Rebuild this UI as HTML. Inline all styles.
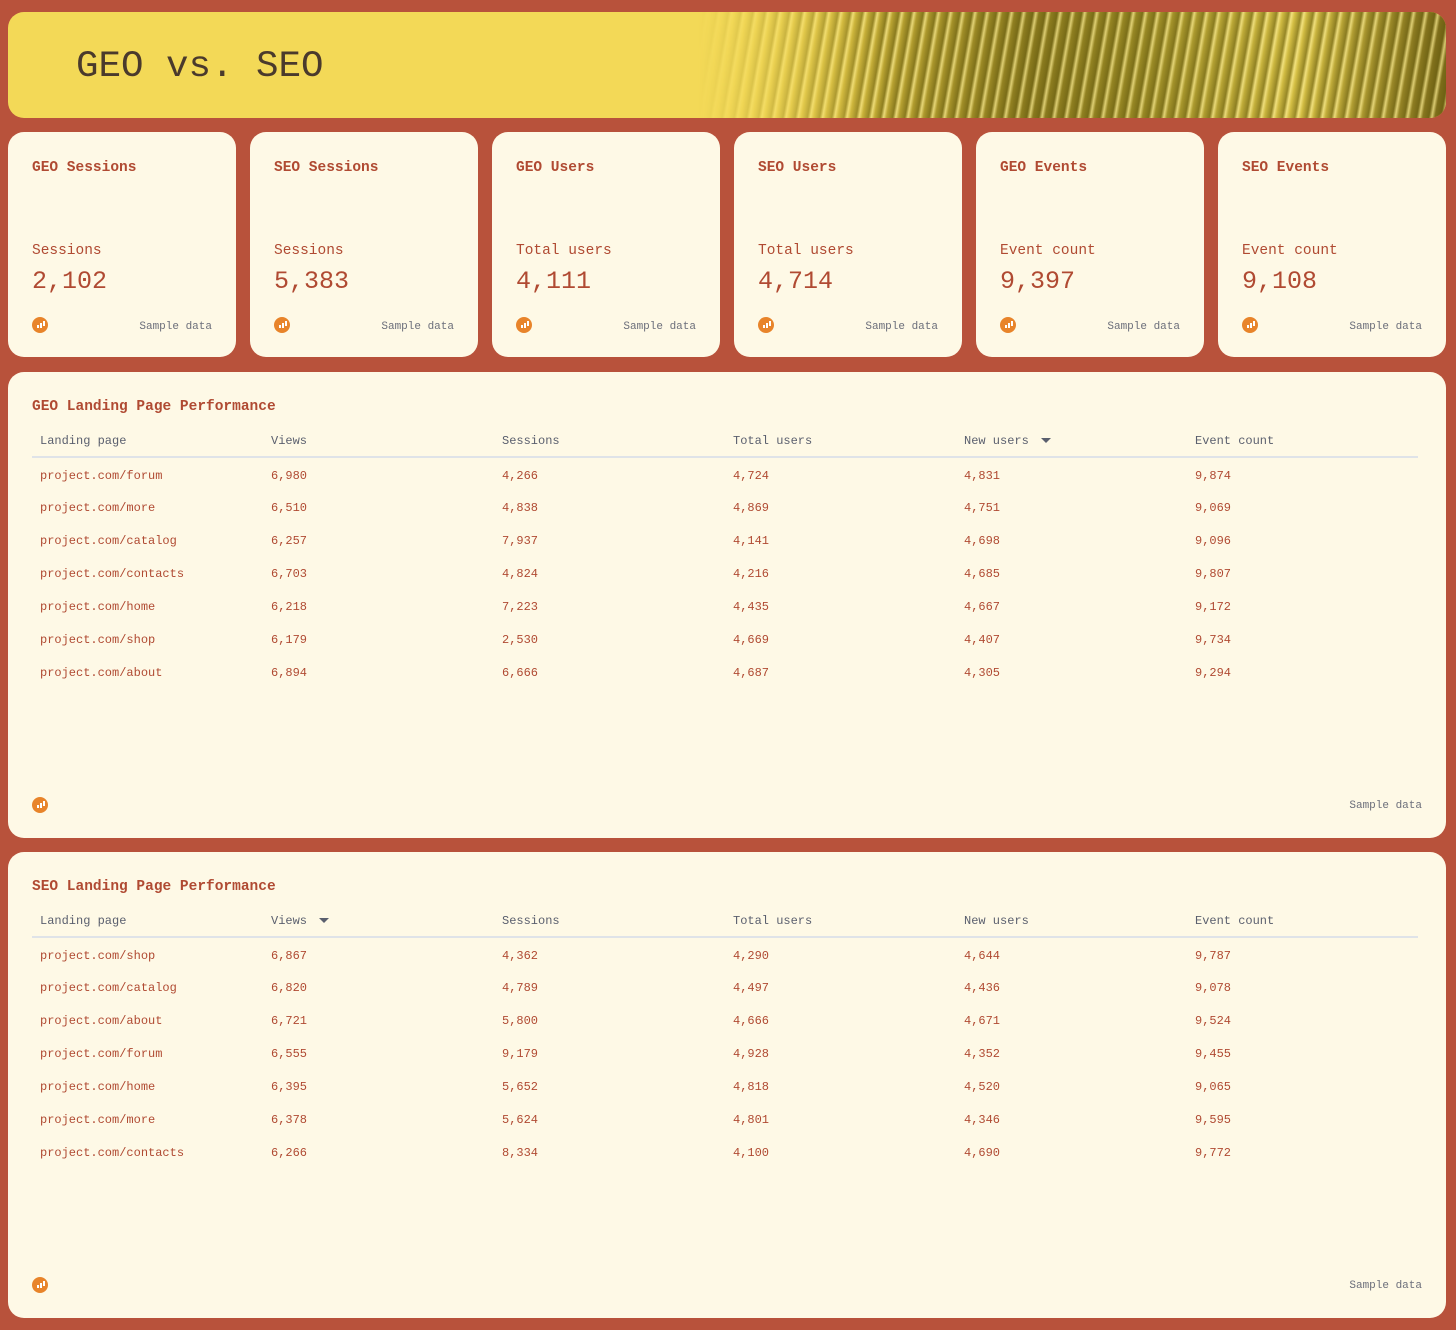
<!DOCTYPE html>
<html><head><meta charset="utf-8"><style>
*{box-sizing:border-box;margin:0;padding:0}
body{width:1456px;height:1330px;background:#b8523b;font-family:"Liberation Mono",monospace;position:relative;overflow:hidden}
.hdr{position:absolute;left:8px;top:12px;width:1438px;height:106px;border-radius:16px;background:#f3d957;overflow:hidden}
.hdr h1{position:absolute;left:68px;top:34px;font-size:37.5px;font-weight:normal;color:#4a3a2c;letter-spacing:0}
.stripes{position:absolute;left:690px;top:0;right:0;bottom:0;
background:repeating-linear-gradient(100deg,rgba(90,80,10,0) 0,rgba(100,90,15,.55) 6px,rgba(255,240,150,.7) 9px,rgba(90,80,10,0) 12px),
linear-gradient(90deg,#f3d957 0%,#c8b038 20%,#8a7a1e 45%,#9a8a25 60%,#d6c045 80%,#7a6a18 100%);
-webkit-mask-image:linear-gradient(90deg,transparent 0,#000 25%);}
.card{position:absolute;top:132px;width:228px;height:225px;background:#fef9e6;border-radius:16px}
.card .t{position:absolute;left:24px;top:28px;font-size:14.5px;font-weight:bold;color:#b04a32}
.card .l{position:absolute;left:24px;top:111px;font-size:14.5px;color:#b04a32}
.card .v{position:absolute;left:24px;top:135px;font-size:25px;color:#b04a32}
.ic{position:absolute;width:16px;height:16px;border-radius:50%;background:#e8842a}
.ic::before{content:"";position:absolute;left:5px;top:8px;width:2px;height:3px;background:#fff;box-shadow:3px -2px 0 0 #fff,6px -4px 0 0 #fff}
.ic::after{content:"";position:absolute;left:8px;top:6px;width:2px;height:5px;background:#fff;box-shadow:3px -2px 0 0 #fff}
.card .ic{left:24px;top:185px}
.sd{position:absolute;font-size:11px;color:#6b6e7a}
.card .sd{right:24px;top:189px}
.panel{position:absolute;left:8px;width:1438px;height:466px;background:#fef9e6;border-radius:16px}
.panel .t{position:absolute;left:24px;top:27px;font-size:14.5px;font-weight:bold;color:#b04a32}
.panel table{position:absolute;left:24px;top:57px;width:1386px;border-collapse:collapse;font-size:12px}
.panel th{text-align:left;font-weight:normal;color:#5a5f6e;height:28px;padding-left:8px;padding-bottom:3px;border-bottom:2px solid #dfe3e8;vertical-align:middle;width:231px}
.panel td{color:#b04a32;height:33px;padding-left:8px;padding-top:3px;vertical-align:middle}
.arr{display:inline-block;margin-left:12px;border-left:5px solid transparent;border-right:5px solid transparent;border-top:5px solid #5a5f6e;vertical-align:middle}
.panel .ic{left:24px;top:425px}
.panel .sd{right:24px;top:428px}
</style></head><body>
<div class="hdr"><div class="stripes"></div><h1>GEO vs. SEO</h1></div>

<div class="card" style="left:8px"><div class="t">GEO Sessions</div><div class="l">Sessions</div><div class="v">2,102</div><div class="ic"></div><div class="sd">Sample data</div></div>
<div class="card" style="left:250px"><div class="t">SEO Sessions</div><div class="l">Sessions</div><div class="v">5,383</div><div class="ic"></div><div class="sd">Sample data</div></div>
<div class="card" style="left:492px"><div class="t">GEO Users</div><div class="l">Total users</div><div class="v">4,111</div><div class="ic"></div><div class="sd">Sample data</div></div>
<div class="card" style="left:734px"><div class="t">SEO Users</div><div class="l">Total users</div><div class="v">4,714</div><div class="ic"></div><div class="sd">Sample data</div></div>
<div class="card" style="left:976px"><div class="t">GEO Events</div><div class="l">Event count</div><div class="v">9,397</div><div class="ic"></div><div class="sd">Sample data</div></div>
<div class="card" style="left:1218px"><div class="t">SEO Events</div><div class="l">Event count</div><div class="v">9,108</div><div class="ic"></div><div class="sd">Sample data</div></div>

<div class="panel" style="top:372px"><div class="t">GEO Landing Page Performance</div>
<table><tr><th>Landing page</th><th>Views</th><th>Sessions</th><th>Total users</th><th>New users<span class="arr"></span></th><th>Event count</th></tr>
<tr><td>project.com/forum</td><td>6,980</td><td>4,266</td><td>4,724</td><td>4,831</td><td>9,874</td></tr>
<tr><td>project.com/more</td><td>6,510</td><td>4,838</td><td>4,869</td><td>4,751</td><td>9,069</td></tr>
<tr><td>project.com/catalog</td><td>6,257</td><td>7,937</td><td>4,141</td><td>4,698</td><td>9,096</td></tr>
<tr><td>project.com/contacts</td><td>6,703</td><td>4,824</td><td>4,216</td><td>4,685</td><td>9,807</td></tr>
<tr><td>project.com/home</td><td>6,218</td><td>7,223</td><td>4,435</td><td>4,667</td><td>9,172</td></tr>
<tr><td>project.com/shop</td><td>6,179</td><td>2,530</td><td>4,669</td><td>4,407</td><td>9,734</td></tr>
<tr><td>project.com/about</td><td>6,894</td><td>6,666</td><td>4,687</td><td>4,305</td><td>9,294</td></tr>
</table><div class="ic"></div><div class="sd">Sample data</div></div>

<div class="panel" style="top:852px"><div class="t">SEO Landing Page Performance</div>
<table><tr><th>Landing page</th><th>Views<span class="arr"></span></th><th>Sessions</th><th>Total users</th><th>New users</th><th>Event count</th></tr>
<tr><td>project.com/shop</td><td>6,867</td><td>4,362</td><td>4,290</td><td>4,644</td><td>9,787</td></tr>
<tr><td>project.com/catalog</td><td>6,820</td><td>4,789</td><td>4,497</td><td>4,436</td><td>9,078</td></tr>
<tr><td>project.com/about</td><td>6,721</td><td>5,800</td><td>4,666</td><td>4,671</td><td>9,524</td></tr>
<tr><td>project.com/forum</td><td>6,555</td><td>9,179</td><td>4,928</td><td>4,352</td><td>9,455</td></tr>
<tr><td>project.com/home</td><td>6,395</td><td>5,652</td><td>4,818</td><td>4,520</td><td>9,065</td></tr>
<tr><td>project.com/more</td><td>6,378</td><td>5,624</td><td>4,801</td><td>4,346</td><td>9,595</td></tr>
<tr><td>project.com/contacts</td><td>6,266</td><td>8,334</td><td>4,100</td><td>4,690</td><td>9,772</td></tr>
</table><div class="ic"></div><div class="sd">Sample data</div></div>
</body></html>
